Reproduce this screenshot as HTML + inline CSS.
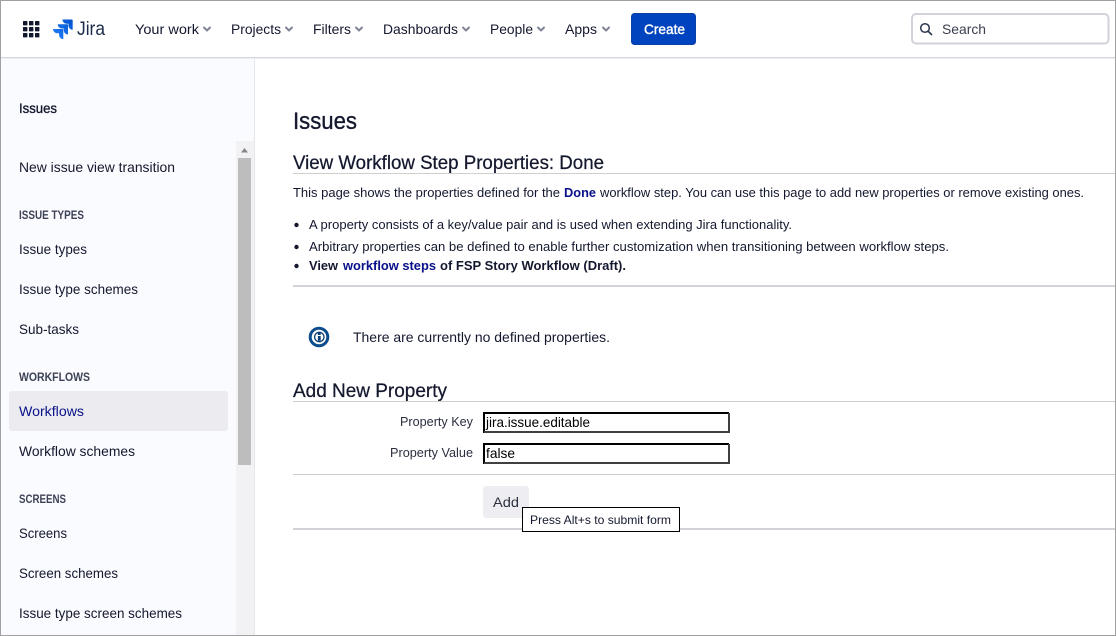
<!DOCTYPE html>
<html lang="en"><head><meta charset="utf-8"><title>Issues</title>
<style>
html,body{margin:0;padding:0;width:1116px;height:636px;overflow:hidden;background:#fff}
svg{display:block}
text{font-family:"Liberation Sans",Arial,sans-serif;font-size:14px;fill:#14182e;white-space:pre}
.nav{font-size:14px}
.b{font-weight:700}
.h{font-size:11.5px;font-weight:700;fill:#3d4256}
.p{font-size:13px}
.l{fill:#08108a}
.m{stroke:#14182e;stroke-width:.35px}
</style></head><body>
<svg xmlns="http://www.w3.org/2000/svg" width="1116" height="636" viewBox="0 0 1116 636">
<defs>
<linearGradient id="jg" x1="1" y1="0" x2="0" y2="1"><stop offset="0" stop-color="#0052cc"/><stop offset="1" stop-color="#2684ff"/></linearGradient>
</defs>
<rect width="1116" height="636" fill="#fff"/>

<!-- sidebar -->
<rect x="0" y="58" width="254" height="578" fill="#fafbfe"/>
<rect x="254" y="58" width="1" height="578" fill="#e6e6ec"/>
<rect x="236" y="141" width="18" height="495" fill="#f2f2f4"/>
<rect x="238" y="158" width="13" height="307" fill="#bdbdbd"/>
<path d="M241 152.500L244.500 148L248 152.500Z" fill="#85858b"/>
<rect x="9" y="391" width="219" height="40" rx="3" fill="#ecebf0"/>

<text x="19" y="113" class="m" textLength="38" lengthAdjust="spacingAndGlyphs" style="font-size:14px">Issues</text>
<text x="19" y="172" textLength="156" lengthAdjust="spacingAndGlyphs">New issue view transition</text>
<text x="19" y="219" class="h" textLength="65" lengthAdjust="spacingAndGlyphs">ISSUE TYPES</text>
<text x="19" y="254" textLength="68" lengthAdjust="spacingAndGlyphs">Issue types</text>
<text x="19" y="294" textLength="119" lengthAdjust="spacingAndGlyphs">Issue type schemes</text>
<text x="19" y="334" textLength="60" lengthAdjust="spacingAndGlyphs">Sub-tasks</text>
<text x="19" y="381" class="h" textLength="71" lengthAdjust="spacingAndGlyphs">WORKFLOWS</text>
<text x="19" y="416" class="l" textLength="65" lengthAdjust="spacingAndGlyphs">Workflows</text>
<text x="19" y="456" textLength="116" lengthAdjust="spacingAndGlyphs">Workflow schemes</text>
<text x="19" y="503" class="h" textLength="47" lengthAdjust="spacingAndGlyphs">SCREENS</text>
<text x="19" y="538" textLength="48" lengthAdjust="spacingAndGlyphs">Screens</text>
<text x="19" y="578" textLength="99" lengthAdjust="spacingAndGlyphs">Screen schemes</text>
<text x="19" y="618" textLength="163" lengthAdjust="spacingAndGlyphs">Issue type screen schemes</text>

<!-- header -->
<rect x="0" y="57" width="1116" height="1" fill="#d4d4dc"/>
<rect x="0" y="58" width="1116" height="1" fill="#efeff3"/>
<g fill="#14182e">
<rect x="23" y="21" width="4.400" height="4.400" rx=".6"/><rect x="29" y="21" width="4.400" height="4.400" rx=".6"/><rect x="35" y="21" width="4.400" height="4.400" rx=".6"/>
<rect x="23" y="27" width="4.400" height="4.400" rx=".6"/><rect x="29" y="27" width="4.400" height="4.400" rx=".6"/><rect x="35" y="27" width="4.400" height="4.400" rx=".6"/>
<rect x="23" y="33" width="4.400" height="4.400" rx=".6"/><rect x="29" y="33" width="4.400" height="4.400" rx=".6"/><rect x="35" y="33" width="4.400" height="4.400" rx=".6"/>
</g>
<g transform="translate(53 19.500) scale(.82)"><path fill="url(#jg)" d="M11.571 11.513H0a5.218 5.218 0 0 0 5.232 5.215h2.13v2.057A5.215 5.215 0 0 0 12.575 24V12.518a1.005 1.005 0 0 0-1.005-1.005zm5.723-5.756H5.736a5.215 5.215 0 0 0 5.215 5.214h2.129v2.058a5.218 5.218 0 0 0 5.215 5.214V6.758a1.001 1.001 0 0 0-1.001-1.001zM23.013 0H11.455a5.215 5.215 0 0 0 5.215 5.215h2.129v2.057A5.215 5.215 0 0 0 24 12.483V1.005A1.001 1.001 0 0 0 23.013 0Z"/></g>
<text x="77" y="35" textLength="28" lengthAdjust="spacingAndGlyphs" style="font-size:19.500px;fill:#1b2a4a">Jira</text>

<text x="135" y="34" class="nav" textLength="64" lengthAdjust="spacingAndGlyphs">Your work</text>
<text x="231" y="34" class="nav" textLength="50" lengthAdjust="spacingAndGlyphs">Projects</text>
<text x="313" y="34" class="nav" textLength="38" lengthAdjust="spacingAndGlyphs">Filters</text>
<text x="383" y="34" class="nav" textLength="75" lengthAdjust="spacingAndGlyphs">Dashboards</text>
<text x="490" y="34" class="nav" textLength="43" lengthAdjust="spacingAndGlyphs">People</text>
<text x="565" y="34" class="nav" textLength="32" lengthAdjust="spacingAndGlyphs">Apps</text>
<g fill="none" stroke="#7f8596" stroke-width="2" stroke-linecap="round" stroke-linejoin="round">
<path d="M204 27.500l3 3 3-3"/><path d="M286 27.500l3 3 3-3"/><path d="M356 27.500l3 3 3-3"/>
<path d="M463 27.500l3 3 3-3"/><path d="M538 27.500l3 3 3-3"/><path d="M603 27.500l3 3 3-3"/>
</g>
<rect x="631.500" y="13.500" width="64" height="31" rx="3" fill="#0043bf" stroke="#0a3fa8"/>
<text x="644" y="34" textLength="41" lengthAdjust="spacingAndGlyphs" style="fill:#fff;font-size:14px;stroke:#fff;stroke-width:.4px">Create</text>

<rect x="912" y="14" width="196.500" height="29.500" rx="4" fill="#fff" stroke="#d2d2da" stroke-width="2"/>
<circle cx="925" cy="28" r="4.300" fill="none" stroke="#2c3650" stroke-width="1.500"/>
<path d="M928.200 31.300L931.500 34.500" stroke="#2c3650" stroke-width="1.700" stroke-linecap="round"/>
<text x="942" y="34" textLength="44" lengthAdjust="spacingAndGlyphs" style="fill:#3a3f4e">Search</text>

<!-- main -->
<text x="293" y="129" class="m" textLength="64" lengthAdjust="spacingAndGlyphs" style="font-size:24px">Issues</text>
<text x="293" y="169" class="m" textLength="311" lengthAdjust="spacingAndGlyphs" style="font-size:19px;stroke-width:.25px">View Workflow Step Properties: Done</text>
<rect x="293" y="173" width="823" height="1" fill="#cfcfcf"/>

<text x="293" y="197" class="p" textLength="267" lengthAdjust="spacingAndGlyphs">This page shows the properties defined for the</text>
<text x="564" y="197" class="p b l" textLength="32" lengthAdjust="spacingAndGlyphs">Done</text>
<text x="600" y="197" class="p" textLength="484" lengthAdjust="spacingAndGlyphs">workflow step. You can use this page to add new properties or remove existing ones.</text>

<circle cx="296.500" cy="225" r="2.200" fill="#14182e"/>
<circle cx="296.500" cy="247" r="2.200" fill="#14182e"/>
<circle cx="296.500" cy="266" r="2.200" fill="#14182e"/>
<text x="309" y="229" class="p" textLength="483" lengthAdjust="spacingAndGlyphs">A property consists of a key/value pair and is used when extending Jira functionality.</text>
<text x="309" y="251" class="p" textLength="640" lengthAdjust="spacingAndGlyphs">Arbitrary properties can be defined to enable further customization when transitioning between workflow steps.</text>
<text x="309" y="270" class="p b" textLength="29" lengthAdjust="spacingAndGlyphs">View</text>
<text x="343" y="270" class="p b l" textLength="93" lengthAdjust="spacingAndGlyphs">workflow steps</text>
<text x="440" y="270" class="p b" textLength="186" lengthAdjust="spacingAndGlyphs">of FSP Story Workflow (Draft).</text>
<rect x="293" y="285" width="823" height="2" fill="#d2d2d8"/>

<circle cx="319" cy="337" r="8.800" fill="#fff" stroke="#0b4c8c" stroke-width="3"/>
<circle cx="319.300" cy="337" r="4.700" fill="none" stroke="#0b3f78" stroke-width="1.300"/>
<rect x="317.900" y="336" width="2.800" height="4.800" fill="#0b3f78"/><rect x="317.900" y="332.800" width="2.800" height="2.200" fill="#0b3f78"/>
<text x="353" y="342" textLength="257" lengthAdjust="spacingAndGlyphs">There are currently no defined properties.</text>

<text x="293" y="397" class="m" textLength="154" lengthAdjust="spacingAndGlyphs" style="font-size:19px;stroke-width:.25px">Add New Property</text>
<rect x="293" y="401" width="823" height="1" fill="#cfcfcf"/>

<text x="400" y="426" class="p" textLength="73" lengthAdjust="spacingAndGlyphs" style="fill:#2a2e3e">Property Key</text>
<text x="390" y="457" class="p" textLength="83" lengthAdjust="spacingAndGlyphs" style="fill:#2a2e3e">Property Value</text>

<path d="M483 412h247v21h-247z" fill="#fff"/>
<path d="M484 433V413H729" fill="none" stroke="#000" stroke-width="2"/>
<path d="M484 432H729V413" fill="none" stroke="#404040" stroke-width="2"/>
<text x="486" y="427" textLength="104" lengthAdjust="spacingAndGlyphs" style="fill:#000">jira.issue.editable</text>
<path d="M483 443h247v21h-247z" fill="#fff"/>
<path d="M484 464V444H729" fill="none" stroke="#000" stroke-width="2"/>
<path d="M484 463H729V444" fill="none" stroke="#404040" stroke-width="2"/>
<text x="486" y="458" textLength="29" lengthAdjust="spacingAndGlyphs" style="fill:#000">false</text>

<rect x="293" y="474" width="823" height="1" fill="#cfcfcf"/>
<rect x="483" y="486" width="46" height="32" rx="3" fill="#eeeef2"/>
<text x="493" y="507" textLength="26" lengthAdjust="spacingAndGlyphs" style="fill:#2a2e3e">Add</text>
<rect x="293" y="528" width="823" height="2" fill="#d2d2d8"/>

<rect x="522.500" y="507.500" width="157" height="24" fill="#fff" stroke="#000"/>
<text x="530" y="524" textLength="141" lengthAdjust="spacingAndGlyphs" style="font-size:12px">Press Alt+s to submit form</text>

<!-- window border -->
<rect x="0" y="0" width="1116" height="1" fill="#a0a0a0"/>
<rect x="0" y="635" width="1116" height="1" fill="#a0a0a0"/>
<rect x="0" y="0" width="1" height="636" fill="#a0a0a0"/>
<rect x="1115" y="0" width="1" height="636" fill="#a0a0a0"/>
</svg>
</body></html>
